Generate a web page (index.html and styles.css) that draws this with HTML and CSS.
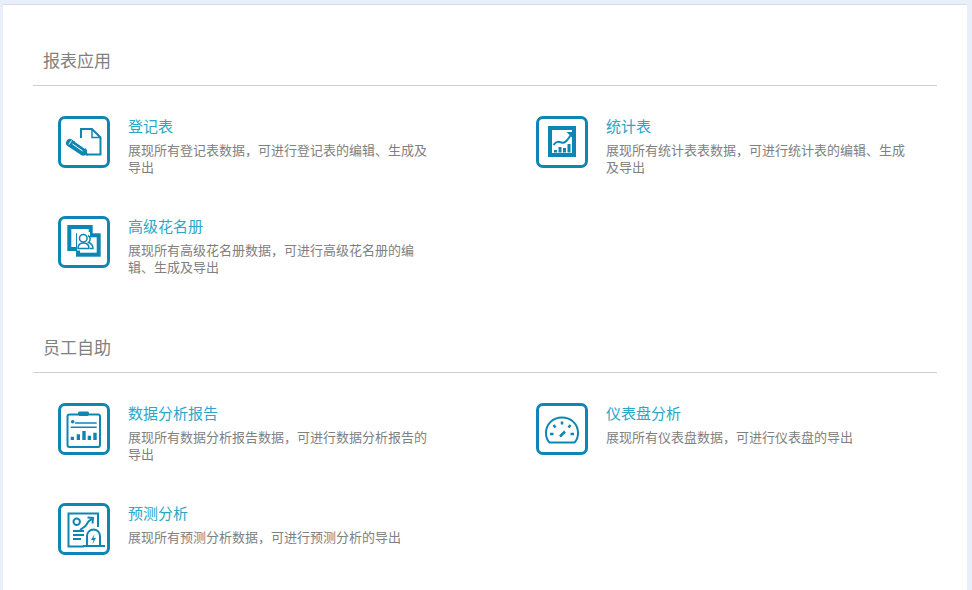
FILE: index.html
```html
<!DOCTYPE html>
<html lang="zh">
<head>
<meta charset="utf-8">
<title>报表应用</title>
<link rel="stylesheet" href="styles.css">
</head>
<body>
<main class="panel">
  <section class="group">
    <h2 class="group-title">报表应用</h2>
    <div class="grid">
      <article class="item">
        <span class="tile">
          <svg viewBox="0 0 52 52" class="glyph"><path class="line" d="M23 22V13H34L42.500 21.500V38.500H28"/><path class="line thin" d="M34 13V21.500H42.500"/><path class="pencil" d="M12 27L25 35.500"/><path class="fill" d="M27.500 32.500L30 39.500 22.500 38.500z"/><path class="cut" d="M13.500 24.500l-2.500 4M14.500 28l10 7M17 25.500l10 7"/></svg>
        </span>
        <div class="copy"><h3 class="name">登记表</h3><p class="desc">展现所有登记表数据，可进行登记表的编辑、生成及导出</p></div>
      </article>
      <article class="item">
        <span class="tile">
          <svg viewBox="0 0 52 52" class="glyph"><rect class="line heavy" x="14" y="12" width="24" height="27"/><path class="line" d="M17.500 29c3-4 5-3.500 8-2.500s5-1 9-7"/><path class="fill" d="M30.500 16h6.500v6.500l-2-2-2.500-2.500z"/><path class="fill" d="M18 34h3v2.500h-3zM22.500 31h3v5.500h-3zM27 32h3v4.500h-3zM31.500 28h3v8.500h-3z"/></svg>
        </span>
        <div class="copy"><h3 class="name">统计表</h3><p class="desc">展现所有统计表表数据，可进行统计表的编辑、生成及导出</p></div>
      </article>
      <article class="item">
        <span class="tile">
          <svg viewBox="0 0 52 52" class="glyph"><rect class="line heavy" x="11.300" y="11" width="21.400" height="22"/><rect class="line heavy on-white" x="20" y="19.300" width="20.700" height="19.400"/><path class="halo" d="M19 16H32V34.500H19z"/><circle class="line thin" cx="25.300" cy="22.300" r="3.800"/><path class="line thin" d="M20 32.500c0-3.500 2-5.500 5.300-5.500s5.700 2 5.700 5.500zM30 19.500c2.500 1 3 5 .5 7 3 1 4.500 3 4.500 6h-3"/></svg>
        </span>
        <div class="copy"><h3 class="name">高级花名册</h3><p class="desc">展现所有高级花名册数据，可进行高级花名册的编辑、生成及导出</p></div>
      </article>
    </div>
  </section>
  <section class="group">
    <h2 class="group-title">员工自助</h2>
    <div class="grid">
      <article class="item">
        <span class="tile">
          <svg viewBox="0 0 52 52" class="glyph"><path class="line" d="M20 11.500H11.500a2 2 0 0 0-2 2V42a2 2 0 0 0 2 2H40a2 2 0 0 0 2-2V13.500a2 2 0 0 0-2-2H31"/><rect class="fill" x="20" y="8.500" width="11" height="4.500" rx="1.500"/><circle class="fill" cx="14.700" cy="18.700" r="1.800"/><path class="line thin" d="M17 20h21.700M12.700 24.300h26"/><path class="fill" d="M12.700 33.700H16V37h-3.300zM18.700 31.300H22V37h-3.300zM24.300 28h3.400v9h-3.400zM29.700 32.700H33V37h-3.300zM35.300 29.700h3.400V37h-3.400z"/></svg>
        </span>
        <div class="copy"><h3 class="name">数据分析报告</h3><p class="desc">展现所有数据分析报告数据，可进行数据分析报告的导出</p></div>
      </article>
      <article class="item">
        <span class="tile">
          <svg viewBox="0 0 52 52" class="glyph"><path class="line" d="M13.500 39.500C11 37 10 33.500 10 30 10 21 17 14.500 26 14.500S42 21 42 30c0 3.500-1 7-3.500 9.500z"/><path class="tick" d="M26 18.500v3M17.500 22l2 2.500M14 31h3.500M34.500 22l-2 2.500M38 31h-3.500M24 33.500l5-5"/></svg>
        </span>
        <div class="copy"><h3 class="name">仪表盘分析</h3><p class="desc">展现所有仪表盘数据，可进行仪表盘的导出</p></div>
      </article>
      <article class="item">
        <span class="tile">
          <svg viewBox="0 0 52 52" class="glyph"><path class="line" d="M26 43.500H10.500V10.500H40V24"/><circle class="line" cx="18.700" cy="18.700" r="3.200"/><path class="line" d="M22 27l5.500-4 3-4.500 4.500-3.500M29.500 14.500l5.500.5-.5 5.500"/><path class="line" d="M15 28h11M15 32h11M15 36h8"/><path class="line" d="M29 42V33a6.500 6.500 0 0 1 13 0V42"/><path class="line" d="M25 43h22"/><path class="fill" d="M36.500 31l-3.500 6h2.500l-1 4 3.500-6h-2.500z"/></svg>
        </span>
        <div class="copy"><h3 class="name">预测分析</h3><p class="desc">展现所有预测分析数据，可进行预测分析的导出</p></div>
      </article>
    </div>
  </section>
</main>
</body>
</html>
```
FILE: styles.css
```css
* { box-sizing: border-box; }
html, body { margin: 0; height: 100%; }
body {
  background: #e9eefb;
  padding: 4px 5px 0 3px;
  overflow: hidden;
  font-family: "Noto Sans CJK SC", "Liberation Sans", sans-serif;
}
.panel {
  background: #fff;
  border-top: 1px solid #d9dde6;
  height: 100%;
  padding: 0 30px;
}
.group { padding-top: 42px; }
.group + .group { padding-top: 0; margin-top: 18px; }
.group-title {
  margin: 0;
  height: 39px;
  padding: 1px 0 0 10px;
  border-bottom: 1px solid #cfcfcf;
  color: #808080;
  font-size: 17px;
  font-weight: 400;
  line-height: 24px;
}
.grid {
  display: grid;
  grid-template-columns: 478px 1fr;
  grid-auto-rows: 100px;
  padding: 30px 0 0 25px;
}
.item { display: flex; gap: 18px; }
.tile {
  flex: none;
  width: 52px;
  height: 52px;
  border: 3px solid #0e86b4;
  border-radius: 7px;
  position: relative;
}
.glyph {
  position: absolute;
  left: -3px;
  top: -3px;
  width: 52px;
  height: 52px;
}
.line { fill: none; stroke: #0e86b4; stroke-width: 2; }
.thin { stroke-width: 1.500; }
.heavy { stroke-width: 4; }
.on-white { fill: #fff; }
.halo { fill: #fff; }
.fill { fill: #0e86b4; }
.tick { fill: none; stroke: #0e86b4; stroke-width: 2.500; }
.pencil { fill: none; stroke: #0e86b4; stroke-width: 8; stroke-linecap: round; }
.cut { fill: none; stroke: #fff; stroke-width: 1; }
.copy { width: 300px; }
.name {
  margin: 0;
  color: #2aa6c6;
  font-size: 15px;
  font-weight: 400;
  line-height: 19px;
}
.desc {
  margin: 6px 0 0;
  color: #808080;
  font-size: 13px;
  line-height: 17px;
}
```
